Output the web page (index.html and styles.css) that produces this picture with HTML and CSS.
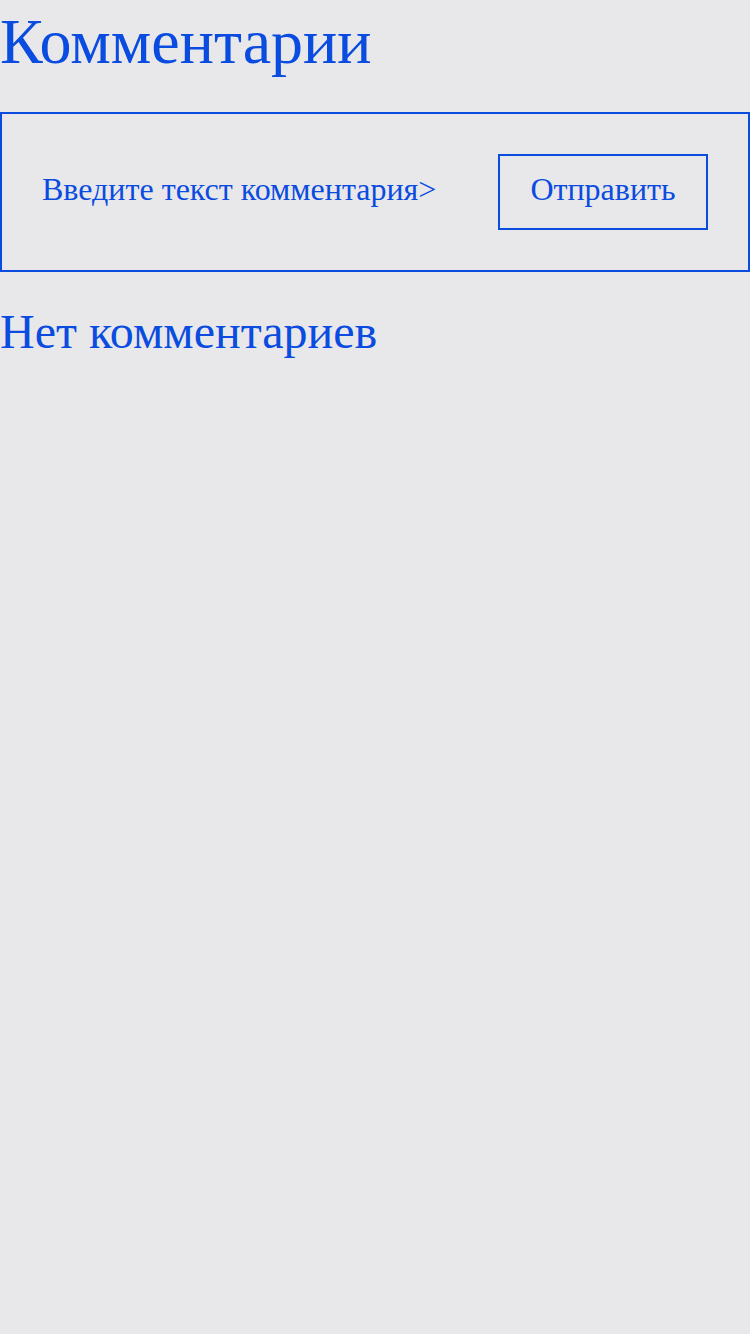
FILE: index.html
```html
<!DOCTYPE html>
<html lang="ru">
<head>
<meta charset="utf-8">
<link rel="stylesheet" href="styles.css">
</head>
<body>
<h1 class="title">Комментарии</h1>
<form class="comment-form">
  <input class="comment-input" type="text" placeholder="Введите текст комментария>">
  <button class="send-btn" type="button">Отправить</button>
</form>
<p class="empty">Нет комментариев</p>
</body>
</html>
```
FILE: styles.css
```css
html, body {
  margin: 0;
  padding: 0;
  background: #e8e8ea;
}
body {
  font-family: "Liberation Serif", "Times New Roman", serif;
  color: #0a4be0;
  width: 750px;
}
.title {
  margin: 0;
  font-size: 64px;
  font-weight: normal;
  line-height: 83px;
  height: 112px;
}
.comment-form {
  display: flex;
  align-items: center;
  justify-content: space-between;
  border: 2px solid #0a4be0;
  padding: 40px;
  box-sizing: border-box;
  height: 160px;
}
.comment-input {
  border: none;
  background: transparent;
  font-family: inherit;
  font-size: 32px;
  color: #0a4be0;
  padding: 0 0 6px;
  outline: none;
  width: 420px;
}
.comment-input::placeholder {
  color: #0a4be0;
  opacity: 1;
}
.send-btn {
  width: 210px;
  height: 76px;
  border: 2px solid #0a4be0;
  background: transparent;
  font-family: inherit;
  font-size: 32px;
  color: #0a4be0;
  padding: 0 0 6px;
  box-sizing: border-box;
}
.empty {
  margin: 30px 0 0;
  font-size: 48px;
  line-height: 60px;
}
```
